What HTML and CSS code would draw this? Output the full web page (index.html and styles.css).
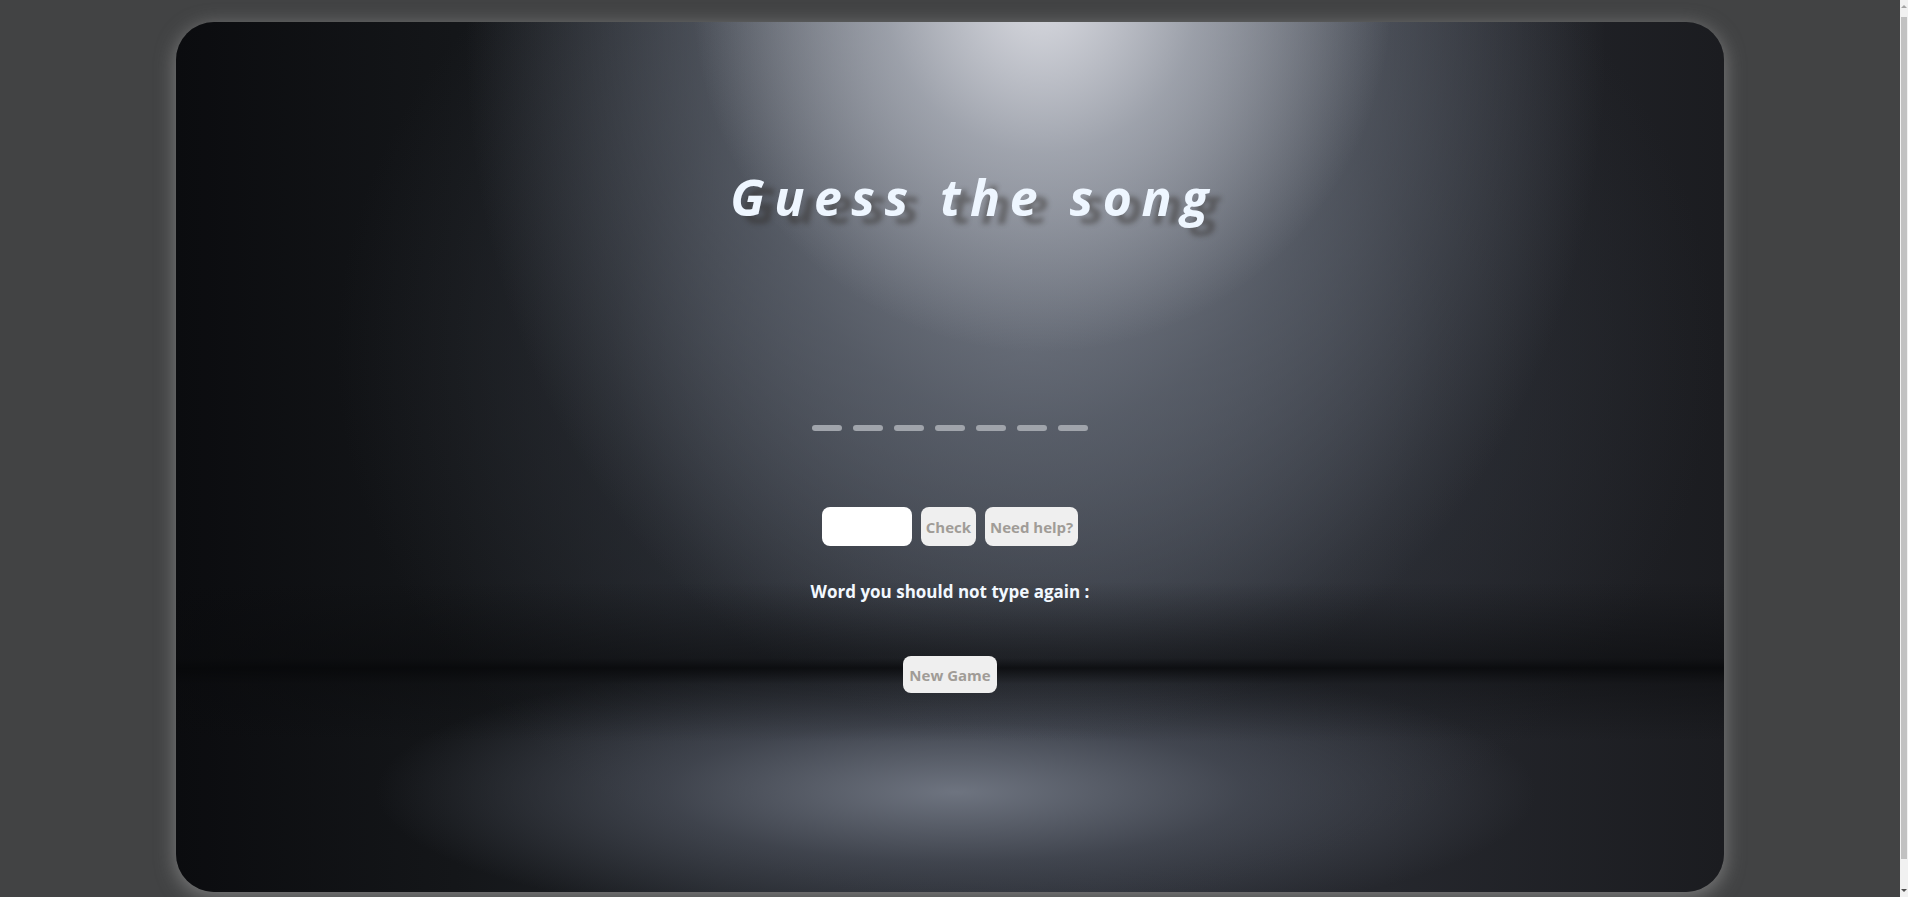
FILE: index.html
```html
<!DOCTYPE html>
<html lang="en">
<head>
<meta charset="utf-8">
<title>Guess the song</title>
<link rel="stylesheet" href="styles.css">
</head>
<body>
<div class="page">
  <main class="stage">
    <h1 class="title">Guess the song</h1>
    <div class="blanks">
      <span class="blank"></span><span class="blank"></span><span class="blank"></span><span class="blank"></span><span class="blank"></span><span class="blank"></span><span class="blank"></span>
    </div>
    <form class="guess-row" onsubmit="return false">
      <input class="guess-input" type="text" aria-label="Your guess">
      <button class="btn" type="button">Check</button>
      <button class="btn" type="button">Need help?</button>
    </form>
    <p class="banned">Word you should not type again :</p>
    <button class="btn btn-new" type="button">New Game</button>
  </main>
</div>
<div class="scrollbar" aria-hidden="true">
  <span class="sb-arrow sb-up"></span>
  <span class="sb-thumb"></span>
  <span class="sb-arrow sb-down"></span>
</div>
</body>
</html>
```

FILE: styles.css
```css
html::-webkit-scrollbar {
  display: none;
}
html {
  scrollbar-width: none;
}

body {
  margin: 0;
  background: #424344;
  font-family: "Open Sans", "Noto Sans", sans-serif;
  display: flex;
  align-items: flex-start;
}

.page {
  flex: 1;
  padding: 22px 0 40px;
}

.scrollbar {
  position: sticky;
  top: 0;
  width: 8px;
  height: 100vh;
  background: #f1f1f1;
  display: flex;
  flex-direction: column;
  align-items: center;
}

.sb-arrow {
  width: 0;
  height: 0;
  border-left: 3px solid transparent;
  border-right: 3px solid transparent;
}
.sb-up {
  margin-top: 5px;
  border-bottom: 3px solid #a3a3a3;
}
.sb-down {
  margin-bottom: 5px;
  border-top: 3px solid #505050;
}

.sb-thumb {
  flex: 1;
  width: 6px;
  margin: 9px 0 30px;
  background: #c1c1c1;
}

.stage {
  width: 1548px;
  height: 870px;
  margin: 0 auto;
  border-radius: 38px;
  box-shadow: 0 4px 20px rgba(190, 190, 190, 0.5);
  display: flex;
  flex-direction: column;
  align-items: center;
  overflow: hidden;
  background:
    linear-gradient(to bottom, rgba(8, 9, 11, 0) 560px, rgba(10, 11, 13, 0.55) 636px, rgba(7, 8, 10, 0.85) 646px, rgba(10, 11, 13, 0.4) 662px, rgba(8, 9, 11, 0) 720px),
    radial-gradient(ellipse 350px 360px at 866px -30px, rgba(222, 223, 229, 0.95) 0%, rgba(180, 184, 193, 0.65) 45%, rgba(150, 155, 165, 0) 100%),
    radial-gradient(ellipse 570px 700px at 860px 20px, rgba(145, 150, 161, 0.9) 0%, rgba(102, 108, 119, 0.62) 55%, rgba(80, 85, 95, 0) 100%),
    radial-gradient(ellipse 580px 140px at 780px 770px, rgba(110, 116, 128, 1) 0%, rgba(76, 81, 92, 0.7) 50%, rgba(40, 43, 50, 0) 100%),
    radial-gradient(ellipse 690px 560px at 850px 330px, rgba(78, 84, 96, 0.85) 0%, rgba(50, 54, 62, 0.45) 60%, rgba(40, 43, 50, 0) 100%),
    linear-gradient(to right, #0b0c0f 0%, #141619 18%, #1f2227 35%, #262930 60%, #25272d 78%, #1b1c20 100%);
}

.title {
  margin: 143px 0 0 48px;
  font-size: 50px;
  line-height: 64px;
  font-weight: 700;
  font-style: italic;
  letter-spacing: 9.5px;
  color: #eef6ff;
  text-shadow: 11px 8px 5px rgba(45, 40, 35, 0.42);
}

.blanks {
  margin-top: 196px;
  display: flex;
  gap: 11px;
}

.blank {
  width: 30px;
  height: 6px;
  border-radius: 3px;
  background: #a0a4ab;
}

.guess-row {
  margin: 76px 0 0;
  display: flex;
  gap: 9px;
}

.guess-input {
  width: 90px;
  height: 39px;
  box-sizing: border-box;
  border: none;
  border-radius: 8px;
  background: #ffffff;
  outline: none;
}

.btn {
  height: 39px;
  padding: 0 5px;
  border: none;
  border-radius: 8px;
  background: #efefef;
  color: #a09c97;
  font-family: "Open Sans", "Noto Sans", sans-serif;
  font-size: 15px;
  font-weight: 700;
  cursor: pointer;
}

.banned {
  margin: 34px 0 0;
  font-size: 17px;
  line-height: 24px;
  font-weight: 700;
  color: #f2f8ff;
}

.btn-new {
  margin-top: 52px;
  height: 37px;
  padding: 0 6px;
}
```
